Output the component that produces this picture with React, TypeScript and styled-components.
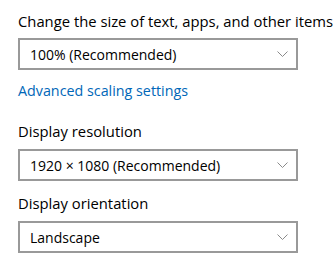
import React from 'react';
import styled, { createGlobalStyle } from 'styled-components';

const GlobalStyle = createGlobalStyle`
  html, body {
    margin: 0;
    padding: 0;
    background: #ffffff;
  }
  body {
    font-family: "Open Sans", "Noto Sans", sans-serif;
  }
`

const Page = styled.div`
  display: flex;
  flex-direction: column;
  align-items: flex-start;
  width: 336px;
  height: 264px;
  padding: 11px 0 0 18px;
  box-sizing: border-box;
`

const Label = styled.div<{ $top?: number }>`
  font-size: 14.8px;
  line-height: 20px;
  height: 20px;
  color: #000000;
  white-space: nowrap;
  margin-top: ${(p) => p.$top || 0}px;
`

const Dropdown = styled.div<{ $top: number }>`
  display: flex;
  align-items: center;
  justify-content: space-between;
  box-sizing: border-box;
  width: 280px;
  height: 32px;
  margin-top: ${(p) => p.$top}px;
  padding: 0 8px 0 10px;
  border: 2px solid #999999;
  font-size: 14px;
  color: #000000;
`

const Link = styled.a`
  margin-top: 11px;
  font-size: 14.3px;
  line-height: 20px;
  color: #0067b8;
  text-decoration: none;
  cursor: pointer;
`

const Chevron = () => (
  <svg width="11" height="6" viewBox="0 0 11 6">
    <path d="M0.5 0.5 L5.5 5.5 L10.5 0.5" fill="none" stroke="#8a8a8a" strokeWidth="1" />
  </svg>
)

const Select = ({ value, top = 8 }: { value: string; top?: number }) => (
  <Dropdown $top={top}>
    <span>{value}</span>
    <Chevron />
  </Dropdown>
)

const App = () => {
  return (
    <Page>
      <GlobalStyle />
      <Label>Change the size of text, apps, and other items</Label>
      <Select value="100% (Recommended)" top={7} />
      <Link>Advanced scaling settings</Link>

      <Label $top={20}>Display resolution</Label>
      <Select value="1920 × 1080 (Recommended)" />

      <Label $top={12}>Display orientation</Label>
      <Select value="Landscape" />
    </Page>
  );
};

export default App;
